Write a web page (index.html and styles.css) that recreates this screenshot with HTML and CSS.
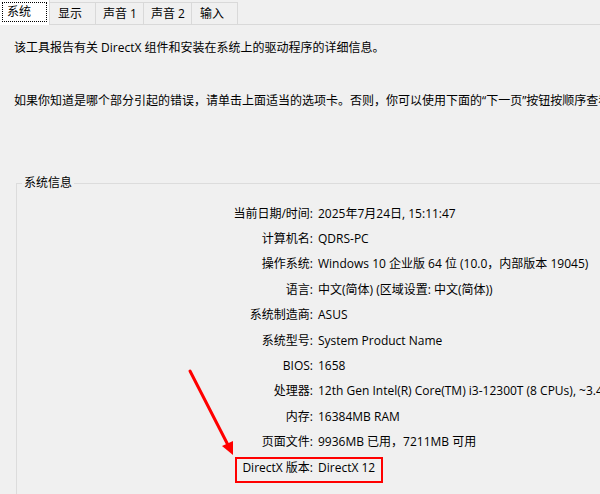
FILE: index.html
```html
<!DOCTYPE html>
<html lang="zh-CN">
<head>
<meta charset="utf-8">
<title>DirectX 诊断工具</title>
<link rel="stylesheet" href="styles.css">
</head>
<body>
<div class="window">
  <div class="tabbar">
    <div class="tab active"><span class="focus">系统</span></div>
    <div class="tab">显示</div>
    <div class="tab wide">声音 1</div>
    <div class="tab wide">声音 2</div>
    <div class="tab">输入</div>
  </div>
  <div class="panel">
    <p class="intro first">该工具报告有关 DirectX 组件和安装在系统上的驱动程序的详细信息。</p>
    <p class="intro second">如果你知道是哪个部分引起的错误，请单击上面适当的选项卡。否则，你可以使用下面的“下一页”按钮按顺序查看每一页。</p>
    <fieldset class="group">
      <legend>系统信息</legend>
      <div class="info">
        <div class="label">当前日期/时间:</div><div class="value">2025年7月24日, 15:11:47</div>
        <div class="label">计算机名:</div><div class="value">QDRS-PC</div>
        <div class="label">操作系统:</div><div class="value">Windows 10 企业版 64 位 (10.0，内部版本 19045)</div>
        <div class="label">语言:</div><div class="value">中文(简体) (区域设置: 中文(简体))</div>
        <div class="label">系统制造商:</div><div class="value">ASUS</div>
        <div class="label">系统型号:</div><div class="value">System Product Name</div>
        <div class="label">BIOS:</div><div class="value">1658</div>
        <div class="label">处理器:</div><div class="value">12th Gen Intel(R) Core(TM) i3-12300T (8 CPUs), ~3.4GHz</div>
        <div class="label">内存:</div><div class="value">16384MB RAM</div>
        <div class="label">页面文件:</div><div class="value">9936MB 已用，7211MB 可用</div>
        <div class="label">DirectX 版本:</div><div class="value">DirectX 12</div>
      </div>
    </fieldset>
  </div>
  <svg class="arrow" width="600" height="494" viewBox="0 0 600 494">
    <line x1="190" y1="371" x2="229" y2="447" stroke="#ff0000" stroke-width="3" stroke-linecap="round"/>
    <polygon points="233,455 222,446 233,441" fill="#ff0000"/>
  </svg>
  <div class="highlight"></div>
</div>
</body>
</html>
```
FILE: styles.css
```css
html, body {
  margin: 0;
  padding: 0;
}
body {
  background: #f0f0f0;
  font-family: "Open Sans", "Noto Sans CJK SC", sans-serif;
  font-size: 12px;
  color: #000;
}
.window {
  position: relative;
  width: 600px;
  height: 494px;
  overflow: hidden;
  background: #f0f0f0;
}
.tabbar {
  display: flex;
  align-items: flex-end;
  height: 24px;
  border-bottom: 1px solid #d9d9d9;
  background: #f0f0f0;
}
.tab {
  box-sizing: border-box;
  width: 46px;
  height: 22px;
  border: 1px solid #d9d9d9;
  border-bottom: none;
  border-left: none;
  background: #f0f0f0;
  display: flex;
  align-items: center;
  padding-left: 8px;
  line-height: 16px;
  white-space: nowrap;
}
.tab.wide {
  width: 48px;
  padding-left: 7px;
}
.tab.active {
  width: 50px;
  height: 25px;
  margin-bottom: -1px;
  background: #ffffff;
  border: none;
  border-right: 1px solid #d9d9d9;
  padding: 2px 2px 3px 2px;
  align-items: stretch;
}
.focus {
  flex: 1;
  border: 1px dotted #000;
  display: flex;
  align-items: center;
  padding-left: 4px;
}
.panel {
  padding-left: 2px;
}
.intro {
  margin: 0;
  padding-left: 12px;
  white-space: nowrap;
  line-height: 16px;
}
.intro.first {
  padding-top: 15px;
}
.intro.second {
  padding-top: 37px;
}
.group {
  margin: 66px 0 0 14px;
  padding: 10px 0 0 0;
  width: 640px;
  height: 400px;
  border: 1px solid #dcdcdc;
  box-sizing: border-box;
}
.group legend {
  margin-left: 5px;
  padding: 0 2px;
  line-height: 16px;
  background: #f0f0f0;
}
.info {
  display: grid;
  grid-template-columns: 296px auto;
  column-gap: 5px;
  grid-auto-rows: 25.4px;
  align-items: center;
  white-space: nowrap;
  line-height: 16px;
}
.label {
  text-align: right;
}
.arrow {
  position: absolute;
  left: 0;
  top: 0;
  pointer-events: none;
}
.highlight {
  position: absolute;
  left: 235px;
  top: 457px;
  width: 144px;
  height: 22px;
  border: 2px solid #ff0000;
}
```
